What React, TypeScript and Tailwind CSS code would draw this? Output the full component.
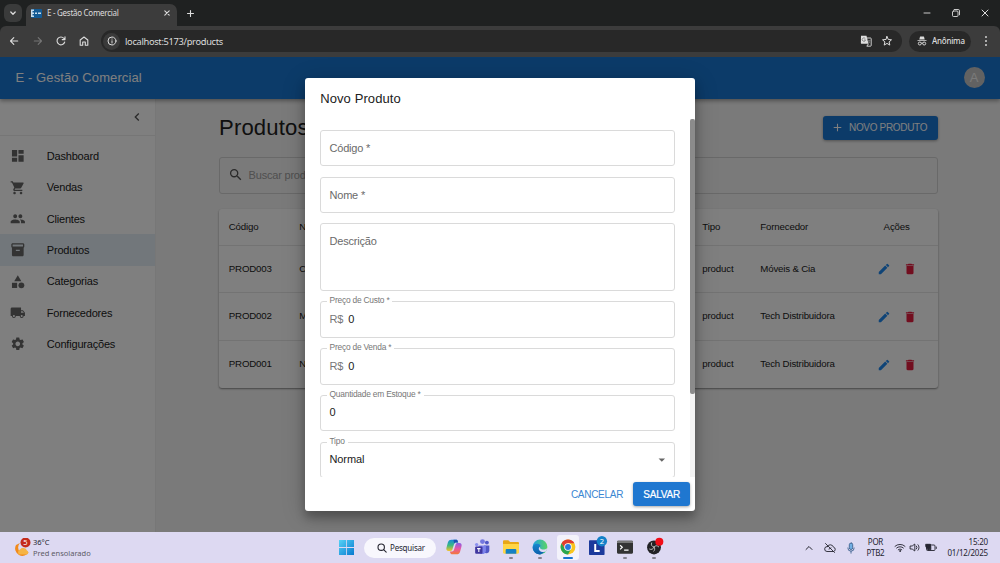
import React from "react";
import {
  MdAdd,
  MdArrowDropDown,
  MdCategory,
  MdChevronLeft,
  MdDashboard,
  MdDelete,
  MdEdit,
  MdInventory2,
  MdLocalShipping,
  MdPeople,
  MdSearch,
  MdSettings,
  MdShoppingCart,
} from "react-icons/md";

const stroke = { fill: "none", stroke: "currentColor", strokeLinecap: "round", strokeLinejoin: "round" } as const;

function BrowserChrome() {
  return (
    <div className="flex h-[57px] shrink-0 flex-col bg-[#1f2121] font-['Noto_Sans',sans-serif] text-[#dcdcdc]">
      <div className="flex h-[26px] shrink-0 items-stretch">
        <div className="flex w-[26px] items-center justify-center">
          <div className="flex h-[18px] w-[18px] items-center justify-center rounded-[6px] bg-[#3a3b3b]">
            <svg className="h-[8px] w-[8px]" viewBox="0 0 8 8" {...stroke} strokeWidth="1.3"><path d="M1.8 3 4 5.2 6.2 3" /></svg>
          </div>
        </div>
        <div className="mt-[4px] flex w-[151px] items-center rounded-t-[7px] bg-[#3c3c3c] pr-[6px] pb-[4px] pl-[5px]">
          <svg className="h-[9px] w-[11px]" viewBox="0 0 11 9">
            <rect width="11" height="9" rx="1" fill="#125a94" />
            <path d="M0 .5h3V2H1.500v1.500H3V5H1.500v1.500H3V8H0zM4 3.500h2V5H4zM7 3.500h3V5H7z" fill="#c9dff0" />
          </svg>
          <span className="ml-[5px] flex-1 text-[8px] tracking-[-0.280px] whitespace-nowrap">E - Gestão Comercial</span>
          <svg className="h-[8px] w-[8px]" viewBox="0 0 8 8" {...stroke} strokeWidth="1.1"><path d="M1.800 1.800 6.200 6.200M6.200 1.800 1.800 6.200" /></svg>
        </div>
        <svg className="mt-[9px] ml-[9px] h-[9px] w-[9px]" viewBox="0 0 9 9" {...stroke} strokeWidth="1.100"><path d="M4.500 1.500v6M1.500 4.500h6" /></svg>
        <div className="ml-auto flex items-center gap-[19px] pr-[10px]">
          <svg className="h-[10px] w-[10px]" viewBox="0 0 10 10" {...stroke} strokeWidth="0.9"><path d="M2 5h6" /></svg>
          <svg className="h-[10px] w-[10px]" viewBox="0 0 10 10" {...stroke} strokeWidth="0.9"><rect x="1.500" y="3" width="5.500" height="5.500" rx="1" /><path d="M3.200 1.500h4a1.300 1.300 0 0 1 1.300 1.300v4" /></svg>
          <svg className="h-[10px] w-[10px]" viewBox="0 0 10 10" {...stroke} strokeWidth="1"><path d="M2 2l6 6M8 2 2 8" /></svg>
        </div>
      </div>
      <div className="flex h-[31px] items-center rounded-t-[6px] bg-[#3c3c3c] pb-[1px] pl-[8px]">
        <svg className="h-[12px] w-[12px]" viewBox="0 0 12 12" {...stroke} strokeWidth="1.100"><path d="M9.700 6H2.500M5.800 2.700 2.500 6l3.300 3.300" /></svg>
        <svg className="ml-[12px] h-[12px] w-[12px] text-[#757575]" viewBox="0 0 12 12" {...stroke} strokeWidth="1.100"><path d="M2.300 6h7.200M6.200 2.700 9.500 6 6.200 9.300" /></svg>
        <svg className="ml-[11px] h-[12px] w-[12px]" viewBox="0 0 12 12" {...stroke} strokeWidth="1.100"><path d="M9.700 7a3.900 3.900 0 1 1-.7-3.500L10 4.500M10 1.800v2.800H7.200" /></svg>
        <svg className="ml-[11px] h-[12px] w-[12px]" viewBox="0 0 12 12" {...stroke} strokeWidth="1.100"><path d="M2.200 5 6 2l3.800 3v5.200H7.300V7H4.700v3.200H2.200z" /></svg>
        <div className="ml-[11px] flex h-[22px] w-[801px] items-center rounded-full bg-[#282828] pr-[9px] pl-[2px]">
          <span className="flex h-[17px] w-[17px] items-center justify-center rounded-full bg-[#3a3a3a]">
            <svg className="h-[10px] w-[10px]" viewBox="0 0 10 10" {...stroke} strokeWidth="1"><circle cx="5" cy="5" r="4" /><path d="M5 4.800v2.200M5 3v.1" /></svg>
          </span>
          <span className="ml-[5px] flex-1 pt-[1px] text-[9.300px] tracking-[-0.320px]">localhost:5173/products</span>
          <svg className="h-[12px] w-[12px]" viewBox="0 0 12 12">
            <path d="M1 .8h5.500l2 8H1.800a.9.900 0 0 1-.9-.9z" fill="#dedede" />
            <path d="M7 3h3.500a.7.700 0 0 1 .7.700v6.800a.7.700 0 0 1-.7.700H6.800l1.700-2.400" fill="none" stroke="#dedede" strokeWidth=".9" />
            <path d="M5.300 3.700A1.700 1.700 0 1 0 5.500 5H4M7.800 5.500h2.800M9.500 5.500c0 1.200-.6 2-1.300 2.500M8.300 6.200l1.800 2" fill="none" stroke="#777" strokeWidth=".8" />
          </svg>
          <svg className="ml-[9px] h-[12px] w-[12px]" viewBox="0 0 12 12" {...stroke} strokeWidth="1"><path d="m6 1.500 1.300 3 3.200.3-2.400 2.100.7 3.200L6 8.400l-2.800 1.700.7-3.200-2.400-2.100 3.200-.3z" /></svg>
        </div>
        <div className="ml-[7px] flex h-[21px] w-[62px] items-center rounded-full bg-[#282828] pl-[8px]">
          <svg className="h-[10px] w-[10px]" viewBox="0 0 10 10" fill="currentColor">
            <path d="M3 .8c.3-.6.800-.4 2-.2 1.200-.2 1.700-.4 2 .2l.7 2.700H2.300zM.5 4.200h9v.9h-9z" />
            <g fill="none" stroke="currentColor" strokeWidth=".95"><circle cx="2.800" cy="7.500" r="1.500" /><circle cx="7.200" cy="7.500" r="1.500" /><path d="M4.200 7.200q.8-.5 1.600 0" /></g>
          </svg>
          <span className="ml-[5px] text-[8px] font-medium tracking-[-0.250px]">Anônima</span>
        </div>
        <svg className="ml-[10.500px] h-[12px] w-[8px]" viewBox="0 0 8 12" fill="currentColor"><circle cx="4" cy="2" r=".95" /><circle cx="4" cy="6" r=".95" /><circle cx="4" cy="10" r=".95" /></svg>
      </div>
    </div>
  );
}

const menu = [
  { label: "Dashboard", icon: MdDashboard },
  { label: "Vendas", icon: MdShoppingCart },
  { label: "Clientes", icon: MdPeople },
  { label: "Produtos", icon: MdInventory2, active: true },
  { label: "Categorias", icon: MdCategory },
  { label: "Fornecedores", icon: MdLocalShipping },
  { label: "Configurações", icon: MdSettings },
];

function Sidebar() {
  return (
    <aside className="w-[156px] shrink-0 border-r border-[#eeeeee] bg-white">
      <div className="flex h-[37px] items-center justify-end border-b border-[#ececec] pr-[10px]">
        <MdChevronLeft className="h-[16px] w-[16px] text-[#555]" />
      </div>
      <nav className="pt-[5px]">
        {menu.map(({ label, icon: Icon, active }) => (
          <div key={label} className={`flex h-[31.300px] items-center pl-[10.400px] ${active ? "bg-[#e4eef6]" : ""}`}>
            <Icon className="h-[15.600px] w-[15.600px] text-[#666]" />
            <span className="ml-[20.800px] pt-[0.600px] text-[11px] tracking-[-0.200px]">{label}</span>
          </div>
        ))}
      </nav>
    </aside>
  );
}

const products = [
  { code: "PROD003", name: "Cadeira", supplier: "Móveis & Cia" },
  { code: "PROD002", name: "Mouse", supplier: "Tech Distribuidora" },
  { code: "PROD001", name: "Notebook", supplier: "Tech Distribuidora" },
];

const columns = "grid grid-cols-[70.500px_403px_58px_107px_1fr] items-center pl-[9.800px] text-[9.700px] tracking-[-0.170px]";

function ProductsPage() {
  return (
    <main className="flex-1 bg-[#f5f5f5] pr-[62px] pl-[63px]">
      <div className="flex h-[58px] items-center justify-between">
        <h1 className="text-[22.100px] tracking-[0.160px]">Produtos</h1>
        <button className="flex h-[24px] w-[115px] items-center rounded-[3px] bg-[#1976d2] pl-[8px] text-[10px] text-white shadow-[0_1px_3px_rgba(0,0,0,0.35)]">
          <MdAdd className="h-[13px] w-[13px]" />
          <span className="ml-[5px] tracking-[-0.330px] whitespace-nowrap">NOVO PRODUTO</span>
        </button>
      </div>
      <div className="flex h-[37px] items-center rounded-[3px] border border-[#d2d2d2] pl-[8px]">
        <MdSearch className="h-[15.600px] w-[15.600px] text-[#555]" />
        <span className="ml-[5px] pt-[1px] text-[11px] tracking-[-0.200px] text-[#a0a0a0]">Buscar produtos...</span>
      </div>
      <div className="mt-[15px] rounded-[3px] bg-white shadow-[0_1px_2px_rgba(0,0,0,0.45)]">
        <div className={`${columns} h-[37px] border-b border-[#e6e6e6] pt-[1px]`}>
          <span>Código</span>
          <span>Nome</span>
          <span>Tipo</span>
          <span>Fornecedor</span>
          <span className="pr-[12px] text-center">Ações</span>
        </div>
        {products.map((p) => (
          <div key={p.code} className={`${columns} h-[47.500px] border-b border-[#e6e6e6] pt-[1px] last:border-0`}>
            <span>{p.code}</span>
            <span>{p.name}</span>
            <span>product</span>
            <span className="whitespace-nowrap">{p.supplier}</span>
            <span className="flex justify-center gap-[12.500px] pr-[11px]">
              <MdEdit className="h-[14px] w-[14px] text-[#1f88ee]" />
              <MdDelete className="h-[14px] w-[14px] text-[#e51c3f]" />
            </span>
          </div>
        ))}
      </div>
    </main>
  );
}

type FieldProps = { label: string; value?: string; prefix?: string; tall?: boolean; select?: boolean };

function Field({ label, value, prefix, tall, select }: FieldProps) {
  const floating = value !== undefined;
  return (
    <div
      className={`relative flex shrink-0 rounded-[3px] border border-[#dadada] px-[8.500px] text-[11px] tracking-[-0.200px] ${
        tall ? "h-[67.300px] items-start pt-[11px]" : "h-[36.500px] items-center"
      }`}
    >
      {floating ? (
        <>
          <span className="absolute -top-[7px] left-[5.500px] bg-white px-[3px] text-[8.400px] leading-[11px] tracking-[-0.210px] text-[#777]">{label}</span>
          {prefix && <span className="mr-[5px] pb-[1px] text-[#777]">{prefix}</span>}
          <span className="flex-1 pb-[1px] tracking-[-0.100px] text-[#212121]">{value}</span>
        </>
      ) : (
        <span className={`text-[#6a6a6a] ${tall ? "leading-[13px]" : ""}`}>{label}</span>
      )}
      {select && <MdArrowDropDown className="-mr-[4px] h-[15.600px] w-[15.600px] text-[#666]" />}
    </div>
  );
}

function ProductDialog() {
  return (
    <div role="dialog" className="flex h-[433.500px] w-[390.600px] flex-col overflow-hidden rounded-[3px] bg-white shadow-[0_7px_10px_rgba(0,0,0,0.25),0_4px_24px_rgba(0,0,0,0.2)]">
      <h2 className="flex h-[41.500px] shrink-0 items-center pl-[15.500px] text-[13px] tracking-[0.100px]">Novo Produto</h2>
      <div className="flex h-[358px] shrink-0 overflow-hidden">
        <div className="flex flex-1 flex-col gap-[10.400px] pt-[10.400px] pr-[15.600px] pl-[15.300px]">
          <Field label="Código *" />
          <Field label="Nome *" />
          <Field label="Descrição" tall />
          <Field label="Preço de Custo *" value="0" prefix="R$" />
          <Field label="Preço de Venda *" value="0" prefix="R$" />
          <Field label="Quantidade em Estoque *" value="0" />
          <Field label="Tipo" value="Normal" select />
        </div>
        <div className="w-[5px] bg-[#f3f3f3]">
          <div className="h-[275px] rounded-[2px] bg-[#8b8b8b]" />
        </div>
      </div>
      <div className="flex flex-1 items-center justify-end gap-[5px] pr-[5.200px] text-[10px]">
        <span className="px-[5px] tracking-[-0.280px] text-[#3a86d2]">CANCELAR</span>
        <button className="flex h-[24px] w-[57px] items-center justify-center rounded-[3px] bg-[#1f77d0] tracking-[-0.200px] text-white shadow-[0_1px_3px_rgba(0,0,0,0.35)] [-webkit-text-stroke:0.2px_white]">SALVAR</button>
      </div>
    </div>
  );
}

function TaskIcon({ children, dot, active }: { children: React.ReactNode; dot?: boolean; active?: boolean }) {
  return (
    <div className="flex w-[28.600px] shrink-0 justify-center">
      <div className={`flex h-[25px] w-[22px] flex-col items-center rounded-[3px] pt-[4px] ${active ? "bg-[#f3f2fb]" : ""}`}>
        <svg className="h-[16px] w-[16px] shrink-0 overflow-visible" viewBox="0 0 18 18">{children}</svg>
        {dot && <span className={`mt-[2px] h-[2px] shrink-0 rounded-full ${active ? "w-[10px] bg-[#1773cf]" : "w-[4px] bg-[#85838f]"}`} />}
      </div>
    </div>
  );
}

function Taskbar() {
  return (
    <footer className="flex h-[31px] shrink-0 items-center bg-[#ddd9f2] font-['Noto_Sans',sans-serif] text-[7.500px] text-[#252530]">
      <div className="flex w-[339px] items-center pl-[13px]">
        <svg className="h-[20px] w-[20px]" viewBox="0 0 20 20">
          <path d="M3 7a7 7 0 1 0 13 7 6 6 0 0 1-9-9z" fill="#f28a1b" />
          <path d="M6 16.500a3 3 0 0 1 1-5 4 4 0 0 1 7 1 2.200 2.200 0 0 1 0 4z" fill="#f6b445" />
          <circle cx="12.500" cy="4.500" r="5" fill="#c42b1c" />
          <text x="12.500" y="7.100" fontSize="7.500" textAnchor="middle" fill="#fff">5</text>
        </svg>
        <div className="leading-[10.500px]">
          <div>36°C</div>
          <div className="text-[#5c5a66]">Pred ensolarado</div>
        </div>
      </div>
      <svg className="h-[15px] w-[15px]" viewBox="0 0 15 15">
        <defs><linearGradient id="win" x2="1" y2="1"><stop stopColor="#55d2f6" /><stop offset="1" stopColor="#0879cf" /></linearGradient></defs>
        <path d="M0 0h7.100v7.100H0zM7.900 0H15v7.100H7.900zM0 7.900h7.100V15H0zM7.900 7.900H15V15H7.900z" fill="url(#win)" />
      </svg>
      <div className="ml-[10px] flex h-[20px] w-[72px] items-center rounded-full bg-[#f8f7fd] pl-[13px]">
        <svg className="h-[10px] w-[10px]" viewBox="0 0 10 10" {...stroke} strokeWidth="1.100"><circle cx="4.200" cy="4.200" r="3.200" /><path d="m6.600 6.600 2.600 2.600" /></svg>
        <span className="ml-[3px] text-[8px] tracking-[-0.200px]">Pesquisar</span>
      </div>
      <div className="ml-[3.500px] flex">
        <TaskIcon>
          <defs>
            <linearGradient id="cpa" x2="0" y2="1"><stop stopColor="#168bd8" /><stop offset=".5" stopColor="#39b883" /><stop offset="1" stopColor="#f3c229" /></linearGradient>
            <linearGradient id="cpb" x2="0" y2="1"><stop stopColor="#8b5ce6" /><stop offset=".5" stopColor="#e857a3" /><stop offset="1" stopColor="#f47a35" /></linearGradient>
          </defs>
          <g transform="translate(-0.9 -0.9) scale(1.1)">
            <path d="M6.500 1.500h4.500c1 0 1.500.5 1.800 1.500l.5 1.500H11c-1 0-1.600.5-2 1.700L7.500 11c-.4 1.500-1 2-2.300 2H3.500C1.500 13 .8 11.500 1.300 9.700l1.500-5.500C3.400 2.300 4.500 1.500 6.500 1.500z" fill="url(#cpa)" />
            <path d="M11.500 16.500H7c-1 0-1.500-.5-1.800-1.500l-.5-1.500H7c1 0 1.600-.5 2-1.700L10.500 7c.4-1.500 1-2 2.300-2h1.700c2 0 2.700 1.500 2.200 3.300l-1.500 5.500c-.6 1.900-1.700 2.700-3.700 2.700z" fill="url(#cpb)" />
            <path d="M8.500 1.500h2.500c1 0 1.500.5 1.800 1.500l.5 1.500H11c-1 0-1.400.4-1.800 1.300z" fill="#1b4fb3" />
          </g>
        </TaskIcon>
        <TaskIcon>
          <g transform="translate(-0.9 -0.9) scale(1.1)">
            <circle cx="9.500" cy="3.500" r="2.500" fill="#7478df" /><circle cx="14" cy="4.500" r="2" fill="#5158c6" />
            <path d="M11 7.500h5.500V13a3 3 0 0 1-5.500 1z" fill="#5158c6" />
            <path d="M5.500 7.500H13V13a3.800 3.800 0 0 1-7.500 0z" fill="#7d83eb" />
            <circle cx="3.500" cy="6.500" r="1.700" fill="#8c91ef" />
            <rect x="2" y="8.500" width="7.500" height="7.500" rx="1" fill="#4037a0" /><path d="M4 10.700h3.500M5.750 10.700v3.500" stroke="#fff" strokeWidth="1.100" />
          </g>
        </TaskIcon>
        <TaskIcon dot>
          <path d="M0 3C0 2 .5 1.500 1.500 1.500h4.500L8 3.500H16.500c1 0 1.500.5 1.500 1.500V15H0z" fill="#e8a716" />
          <path d="M0 5.500h18v9.500c0 1-.5 1.500-1.500 1.500h-15C.5 16.500 0 16 0 15z" fill="#ffd546" />
          <path d="M3 12.500c0-.8.400-1.200 1.200-1.200h9.600c.8 0 1.200.4 1.200 1.200v4H3z" fill="#1480c4" />
        </TaskIcon>
        <TaskIcon dot>
          <defs>
            <linearGradient id="ea" x2="1"><stop stopColor="#1ea0e4" /><stop offset="1" stopColor="#5bd463" /></linearGradient>
            <linearGradient id="eb" x2="0" y2="1"><stop stopColor="#1788cf" /><stop offset="1" stopColor="#0d5eac" /></linearGradient>
          </defs>
          <circle cx="9" cy="9" r="8.300" fill="url(#ea)" />
          <path d="M.8 9C1.500 5.500 5 4.800 7.500 5.500c2 .6 2.500 2 1.500 3.500-1.800 3 1 5 5.500 4.300C12 17.500 8.500 17.700 6.500 17 2.800 15.800.5 12.500.8 9z" fill="url(#eb)" />
          <path d="M9.300 8.500c-.8 1.200-.6 2.700 2 3.200 2.500.3 4.200-.2 6-1.700L16 14c-3 1.200-7.500.5-8.300-2.300-.3-1.500.4-2.500 1.600-3.200z" fill="#ddd9f2" />
        </TaskIcon>
        <TaskIcon dot active>
          <circle cx="9" cy="9" r="8.300" fill="#f9c51c" />
          <path d="M1.810 4.850A8.300 8.300 0 0 0 9 17.300l3.600-6.200L9 9 5.600 11z" fill="#2aa650" />
          <path d="M1.810 4.850A8.300 8.300 0 0 1 16.190 4.850H9L5.500 11z" fill="#e13c31" />
          <circle cx="9" cy="9" r="4.200" fill="#fff" /><circle cx="9" cy="9" r="3.300" fill="#2878df" />
        </TaskIcon>
        <TaskIcon>
          <rect x="0" y="1.500" width="17.500" height="16.500" rx=".8" fill="#1c3a9c" />
          <path d="M7 5.500v8h5" fill="none" stroke="#fff" strokeWidth="2.200" />
          <circle cx="14.500" cy="2.500" r="5.800" fill="#1481c9" /><text x="14.500" y="5.500" fontSize="8.500" textAnchor="middle" fill="#fff">2</text>
        </TaskIcon>
        <TaskIcon dot>
          <rect x="0" y="2" width="18" height="14.500" rx="1.200" fill="#333" /><path d="M0 4.500V3.200Q0 2 1.200 2h15.600Q18 2 18 3.200v1.300z" fill="#777" />
          <path d="m3.500 7 2.500 2.300-2.500 2.300M8 12.500h5" fill="none" stroke="#fff" strokeWidth="1.300" />
        </TaskIcon>
        <TaskIcon dot>
          <circle cx="9" cy="9.500" r="7.800" fill="#222225" />
          <g fill="none" stroke="#bbb" strokeWidth="1.100"><path d="M9 9C6.500 8.500 5.300 6.500 6.500 4M9 9c1.600-1.900 4-1.900 5.600.2M9 9c-.8 2.500-3 3.400-5.300 2.200M9 9c1.200 1.500 1 3.500-.5 5" /></g>
          <circle cx="15" cy="3" r="4.500" fill="#f20d18" />
        </TaskIcon>
      </div>
      <div className="ml-auto flex items-center pr-[12px]">
        <svg className="h-[10px] w-[10px]" viewBox="0 0 10 10" {...stroke} strokeWidth="1"><path d="m2 6.500 3-3 3 3" /></svg>
        <svg className="ml-[10px] h-[12px] w-[12px]" viewBox="0 0 12 12" {...stroke} strokeWidth=".9"><path d="M3.300 4.500A3.400 3.400 0 0 1 9.500 5.200 2.200 2.200 0 0 1 9.500 9.500H3a2.300 2.300 0 0 1 .3-5zM1.500 1.500l9 9M5 7l2-1" /></svg>
        <svg className="ml-[9px] h-[12px] w-[12px] text-[#3e6290]" viewBox="0 0 12 12" {...stroke} strokeWidth=".9"><rect x="4.300" y="1" width="3.400" height="6.500" rx="1.700" fill="#72afe4" /><path d="M2.800 6a3.200 3.200 0 0 0 6.400 0M6 9.200v2" /></svg>
        <div className="ml-[7px] w-[22px] text-center text-[8px] leading-[10.500px] tracking-[-0.300px]"><div>POR</div><div>PTB2</div></div>
        <svg className="ml-[8px] h-[11px] w-[12px]" viewBox="0 0 12 11" {...stroke} strokeWidth=".9"><path d="M1 4.300a7.200 7.200 0 0 1 10 0M2.600 6a4.900 4.900 0 0 1 6.800 0M4.200 7.700a2.600 2.600 0 0 1 3.600 0" /><circle cx="6" cy="9" r=".5" /></svg>
        <svg className="ml-[3px] h-[11px] w-[12px]" viewBox="0 0 12 11" {...stroke} strokeWidth=".9"><path d="M1.500 4h1.700l2.600-2v7L3.200 7H1.500zM7.400 4a2.200 2.200 0 0 1 0 3M9 2.700a4 4 0 0 1 0 5.600" /></svg>
        <svg className="ml-[4px] h-[11px] w-[12px]" viewBox="0 0 12 11" {...stroke} strokeWidth=".9"><rect x="1.500" y="3" width="8.500" height="5.500" rx="1" /><path d="M11.300 5v1.500" /><path d="M1 2.300h4.500V5L3.200 7.800 1 5z" fill="currentColor" /><path d="M3 7.800h2.800V5z" fill="currentColor" /></svg>
        <div className="ml-[10px] text-right text-[8px] leading-[10.500px] tracking-[-0.200px] whitespace-nowrap"><div>15:20</div><div>01/12/2025</div></div>
      </div>
    </footer>
  );
}

export default function App() {
  return (
    <div className="flex h-[563px] w-[1000px] flex-col overflow-hidden">
      <BrowserChrome />
      <div className="relative flex h-[475px] shrink-0 flex-col overflow-hidden font-['Liberation_Sans',sans-serif] text-[#212121]">
        <header className="z-10 flex h-[41.500px] shrink-0 items-center justify-between bg-[#1976d2] pr-[15.500px] pl-[15.500px] text-white shadow-[0_2px_4px_rgba(0,0,0,0.35)]">
          <span className="text-[13px] tracking-[0.100px]">E - Gestão Comercial</span>
          <span className="flex h-[21px] w-[21px] items-center justify-center rounded-full bg-[#c4c4c4] text-[13px] text-[#f5f5f5]">A</span>
        </header>
        <div className="flex flex-1">
          <Sidebar />
          <ProductsPage />
        </div>
        <div className="absolute inset-0 z-20 flex items-center justify-center bg-black/50">
          <ProductDialog />
        </div>
      </div>
      <Taskbar />
    </div>
  );
}
